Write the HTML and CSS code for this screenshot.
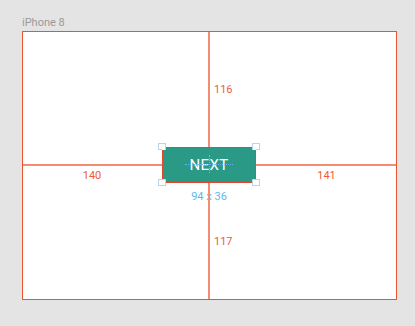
FILE: index.html
```html
<!DOCTYPE html>
<html>
<head>
<meta charset="utf-8">
<link rel="stylesheet" href="styles.css">
</head>
<body>
<div class="stage">
  <div class="device-name">iPhone 8</div>
  <div class="frame">
    <div class="cell cell-top"><span class="dist dist-v">116</span></div>
    <div class="cell cell-left"><span class="dist dist-h">140</span></div>
    <div class="cell cell-mid">
      <div class="button">NEXT</div>
      <span class="handle h-tl"></span>
      <span class="handle h-tr"></span>
      <span class="handle h-bl"></span>
      <span class="handle h-br"></span>
      <span class="size">94 x 36</span>
    </div>
    <div class="cell cell-right"><span class="dist dist-h">141</span></div>
    <div class="cell cell-bottom"><span class="dist dist-v">117</span></div>
  </div>
</div>
</body>
</html>
```
FILE: styles.css
```css
html, body {
  margin: 0;
  padding: 0;
  background: #e4e4e4;
  font-family: Roboto, "Liberation Sans", sans-serif;
}
.stage {
  padding: 14px 22px 0 22px;
}
.device-name {
  font-size: 11px;
  line-height: 17px;
  color: #9a9a9a;
}
.frame {
  width: 375px;
  height: 269px;
  background: #fff;
  box-shadow: inset 0 0 0 1px #e8552e;
  display: grid;
  grid-template-columns: 140px 94px 141px;
  grid-template-rows: 116px 36px 117px;
}
.cell {
  position: relative;
  display: flex;
  align-items: center;
}
.cell-top { grid-column: 2; grid-row: 1; }
.cell-bottom { grid-column: 2; grid-row: 3; }
.cell-left { grid-column: 1; grid-row: 2; }
.cell-right { grid-column: 3; grid-row: 2; }
.cell-mid { grid-column: 2; grid-row: 2; }

.cell-top::before, .cell-bottom::before {
  content: "";
  position: absolute;
  left: 46px;
  top: 0;
  bottom: 0;
  width: 2px;
  background: #f38c73;
}
.cell-top::before { top: 1px; }
.cell-bottom::before { bottom: 1px; }
.cell-left::before, .cell-right::before {
  content: "";
  position: absolute;
  top: 17px;
  height: 2px;
  left: 0;
  right: 0;
  background: #f38c73;
}
.cell-left::before { left: 1px; }
.cell-right::before { right: 1px; }

.dist {
  font-size: 11px;
  line-height: 13px;
  color: #ee5b36;
}
.dist-v {
  margin-left: 52px;
}
.cell-left, .cell-right {
  justify-content: center;
  align-items: flex-start;
}
.dist-h {
  margin-top: 22px;
}

.button {
  position: relative;
  flex: 1;
  align-self: stretch;
  box-sizing: border-box;
  background: #2a9a86;
  border: 1px solid #e4482c;
  border-bottom-width: 2px;
  color: #fff;
  font-size: 15px;
  letter-spacing: 0.3px;
  display: flex;
  align-items: center;
  justify-content: center;
}
.button::before {
  content: "";
  position: absolute;
  left: 22px;
  right: 22px;
  top: 16px;
  border-top: 1px dotted rgba(110, 185, 240, 0.9);
}
.button::after {
  content: "";
  position: absolute;
  top: 7px;
  bottom: 8px;
  left: 46px;
  border-left: 1px dotted rgba(110, 185, 240, 0.9);
}
.handle {
  position: absolute;
  width: 8px;
  height: 7px;
  box-sizing: border-box;
  border: 1px solid #b3d6f5;
}
.handle::after {
  content: "";
  position: absolute;
  width: 3px;
  height: 3px;
  background: #fff;
}
.h-tl { left: -4px; top: -4px; }
.h-tr { right: -4px; top: -4px; }
.h-bl { left: -4px; bottom: -3px; }
.h-br { right: -4px; bottom: -3px; }
.h-tl::after { left: 3px; top: 3px; }
.h-tr::after { right: 3px; top: 3px; }
.h-bl::after { left: 3px; bottom: 2px; }
.h-br::after { right: 3px; bottom: 2px; }

.size {
  position: absolute;
  left: 0;
  right: 0;
  top: 43px;
  text-align: center;
  font-size: 11px;
  line-height: 13px;
  color: #62b6ee;
}
```
